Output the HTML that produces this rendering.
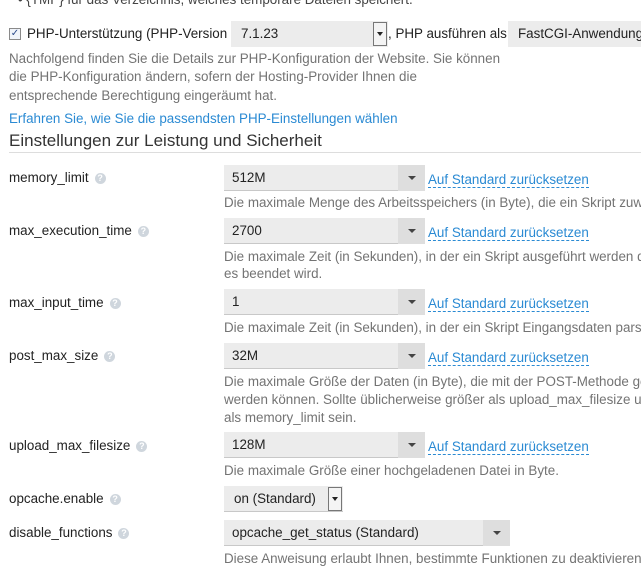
<!DOCTYPE html>
<html style="overflow:hidden;width:641px;height:569px"><head><meta charset="utf-8"><style>
body{margin:0;width:641px;height:569px;overflow:hidden;background:#fff;font-family:"Liberation Sans",sans-serif;font-size:13.4px;color:#222;position:relative}
.t{position:absolute;white-space:nowrap;line-height:18px}
.g{color:#737373}
.a{color:#2a8ad3}
.l{color:#2a8ad3;border-bottom:1px dashed #2a8ad3;line-height:16px}
.box{position:absolute;background:#ececec;border-bottom:1px solid #c8c8c8;height:26px;box-sizing:border-box}
.box span{position:absolute;left:8px;top:4px;line-height:18px;white-space:nowrap}
.ar{position:absolute;right:0;top:0;width:27px;height:26px;background:#dedede}
.ar:after{content:"";position:absolute;left:10px;top:11px;border:4px solid transparent;border-top:4px solid #444;border-bottom:0}
.q{display:inline-block;width:11px;height:11px;border-radius:50%;background:#cfd6dd;color:#fff;font-size:9px;line-height:11px;text-align:center;margin-left:6px;vertical-align:1px;font-weight:bold}
.nb{position:absolute;top:1px;right:1px;width:14px;height:22px;background:#f4f4f4;border:1px solid #777;box-sizing:border-box}
.nb:after{content:"";position:absolute;left:3px;top:9px;border:3.5px solid transparent;border-top:4px solid #222;border-bottom:0}
</style></head><body>
<div class="t" style="left:18px;top:-9px;color:#444">• {TMP} für das Verzeichnis, welches temporäre Dateien speichert.</div>
<div style="position:absolute;left:9px;top:28px;width:12px;height:12px;border:1px solid #8a8a8a;box-sizing:border-box;background:#f0f4fa;font-size:10px;line-height:10px;text-align:center;color:#2a4a8a">✓</div>
<div class="t" style="left:27px;top:25px">PHP-Unterstützung (PHP-Version</div>
<div class="box" style="left:231px;top:21px;width:157px;border:none;height:26px"><span style="left:10px">7.1.23</span><div class="nb" style="height:24px"></div></div>
<div class="t" style="left:388px;top:25px">, PHP ausführen als</div>
<div class="box" style="left:508px;top:21px;width:133px;border:none;overflow:hidden"><span style="left:10px">FastCGI-Anwendung</span></div>
<div class="t g" style="left:9px;top:50px">Nachfolgend finden Sie die Details zur PHP-Konfiguration der Website. Sie können</div>
<div class="t g" style="left:9px;top:68px">die PHP-Konfiguration ändern, sofern der Hosting-Provider Ihnen die</div>
<div class="t g" style="left:9px;top:87px">entsprechende Berechtigung eingeräumt hat.</div>
<div class="t a" style="left:9px;top:110px">Erfahren Sie, wie Sie die passendsten PHP-Einstellungen wählen</div>
<div class="t" style="left:9px;top:130px;font-size:17px;line-height:22px;color:#333">Einstellungen zur Leistung und Sicherheit</div>
<div style="position:absolute;left:9px;top:152px;width:632px;height:1px;background:#ddd"></div>

<div class="t" style="left:9px;top:169px">memory_limit<span class="q">?</span></div>
<div class="box" style="left:224px;top:165px;width:201px"><span>512M</span><div class="ar"></div></div>
<div class="t" style="left:428px;top:171px"><span class="l">Auf Standard zurücksetzen</span></div>
<div class="t g" style="left:224px;top:194px">Die maximale Menge des Arbeitsspeichers (in Byte), die ein Skript zuweisen darf.</div>

<div class="t" style="left:9px;top:222px">max_execution_time<span class="q">?</span></div>
<div class="box" style="left:224px;top:218px;width:201px"><span>2700</span><div class="ar"></div></div>
<div class="t" style="left:428px;top:224px"><span class="l">Auf Standard zurücksetzen</span></div>
<div class="t g" style="left:224px;top:248px">Die maximale Zeit (in Sekunden), in der ein Skript ausgeführt werden darf, bevor</div>
<div class="t g" style="left:224px;top:265px">es beendet wird.</div>

<div class="t" style="left:9px;top:294px">max_input_time<span class="q">?</span></div>
<div class="box" style="left:224px;top:289px;width:201px"><span>1</span><div class="ar"></div></div>
<div class="t" style="left:428px;top:295px"><span class="l">Auf Standard zurücksetzen</span></div>
<div class="t g" style="left:224px;top:319px">Die maximale Zeit (in Sekunden), in der ein Skript Eingangsdaten parsen darf.</div>

<div class="t" style="left:9px;top:347px">post_max_size<span class="q">?</span></div>
<div class="box" style="left:224px;top:343px;width:201px"><span>32M</span><div class="ar"></div></div>
<div class="t" style="left:428px;top:349px"><span class="l">Auf Standard zurücksetzen</span></div>
<div class="t g" style="left:224px;top:373px">Die maximale Größe der Daten (in Byte), die mit der POST-Methode gesendet</div>
<div class="t g" style="left:224px;top:391px">werden können. Sollte üblicherweise größer als upload_max_filesize und kleiner</div>
<div class="t g" style="left:224px;top:409px">als memory_limit sein.</div>

<div class="t" style="left:9px;top:437px">upload_max_filesize<span class="q">?</span></div>
<div class="box" style="left:224px;top:432px;width:201px"><span>128M</span><div class="ar"></div></div>
<div class="t" style="left:428px;top:438px"><span class="l">Auf Standard zurücksetzen</span></div>
<div class="t g" style="left:224px;top:462px">Die maximale Größe einer hochgeladenen Datei in Byte.</div>

<div class="t" style="left:9px;top:490px">opcache.enable<span class="q">?</span></div>
<div class="box" style="left:224px;top:486px;width:119px;height:26px"><span style="left:10px">on (Standard)</span><div class="nb" style="top:1px;height:24px"></div></div>

<div class="t" style="left:9px;top:524px">disable_functions<span class="q">?</span></div>
<div class="box" style="left:224px;top:520px;width:286px"><span>opcache_get_status (Standard)</span><div class="ar"></div></div>
<div class="t g" style="left:224px;top:550px">Diese Anweisung erlaubt Ihnen, bestimmte Funktionen zu deaktivieren.</div>
</body></html>
